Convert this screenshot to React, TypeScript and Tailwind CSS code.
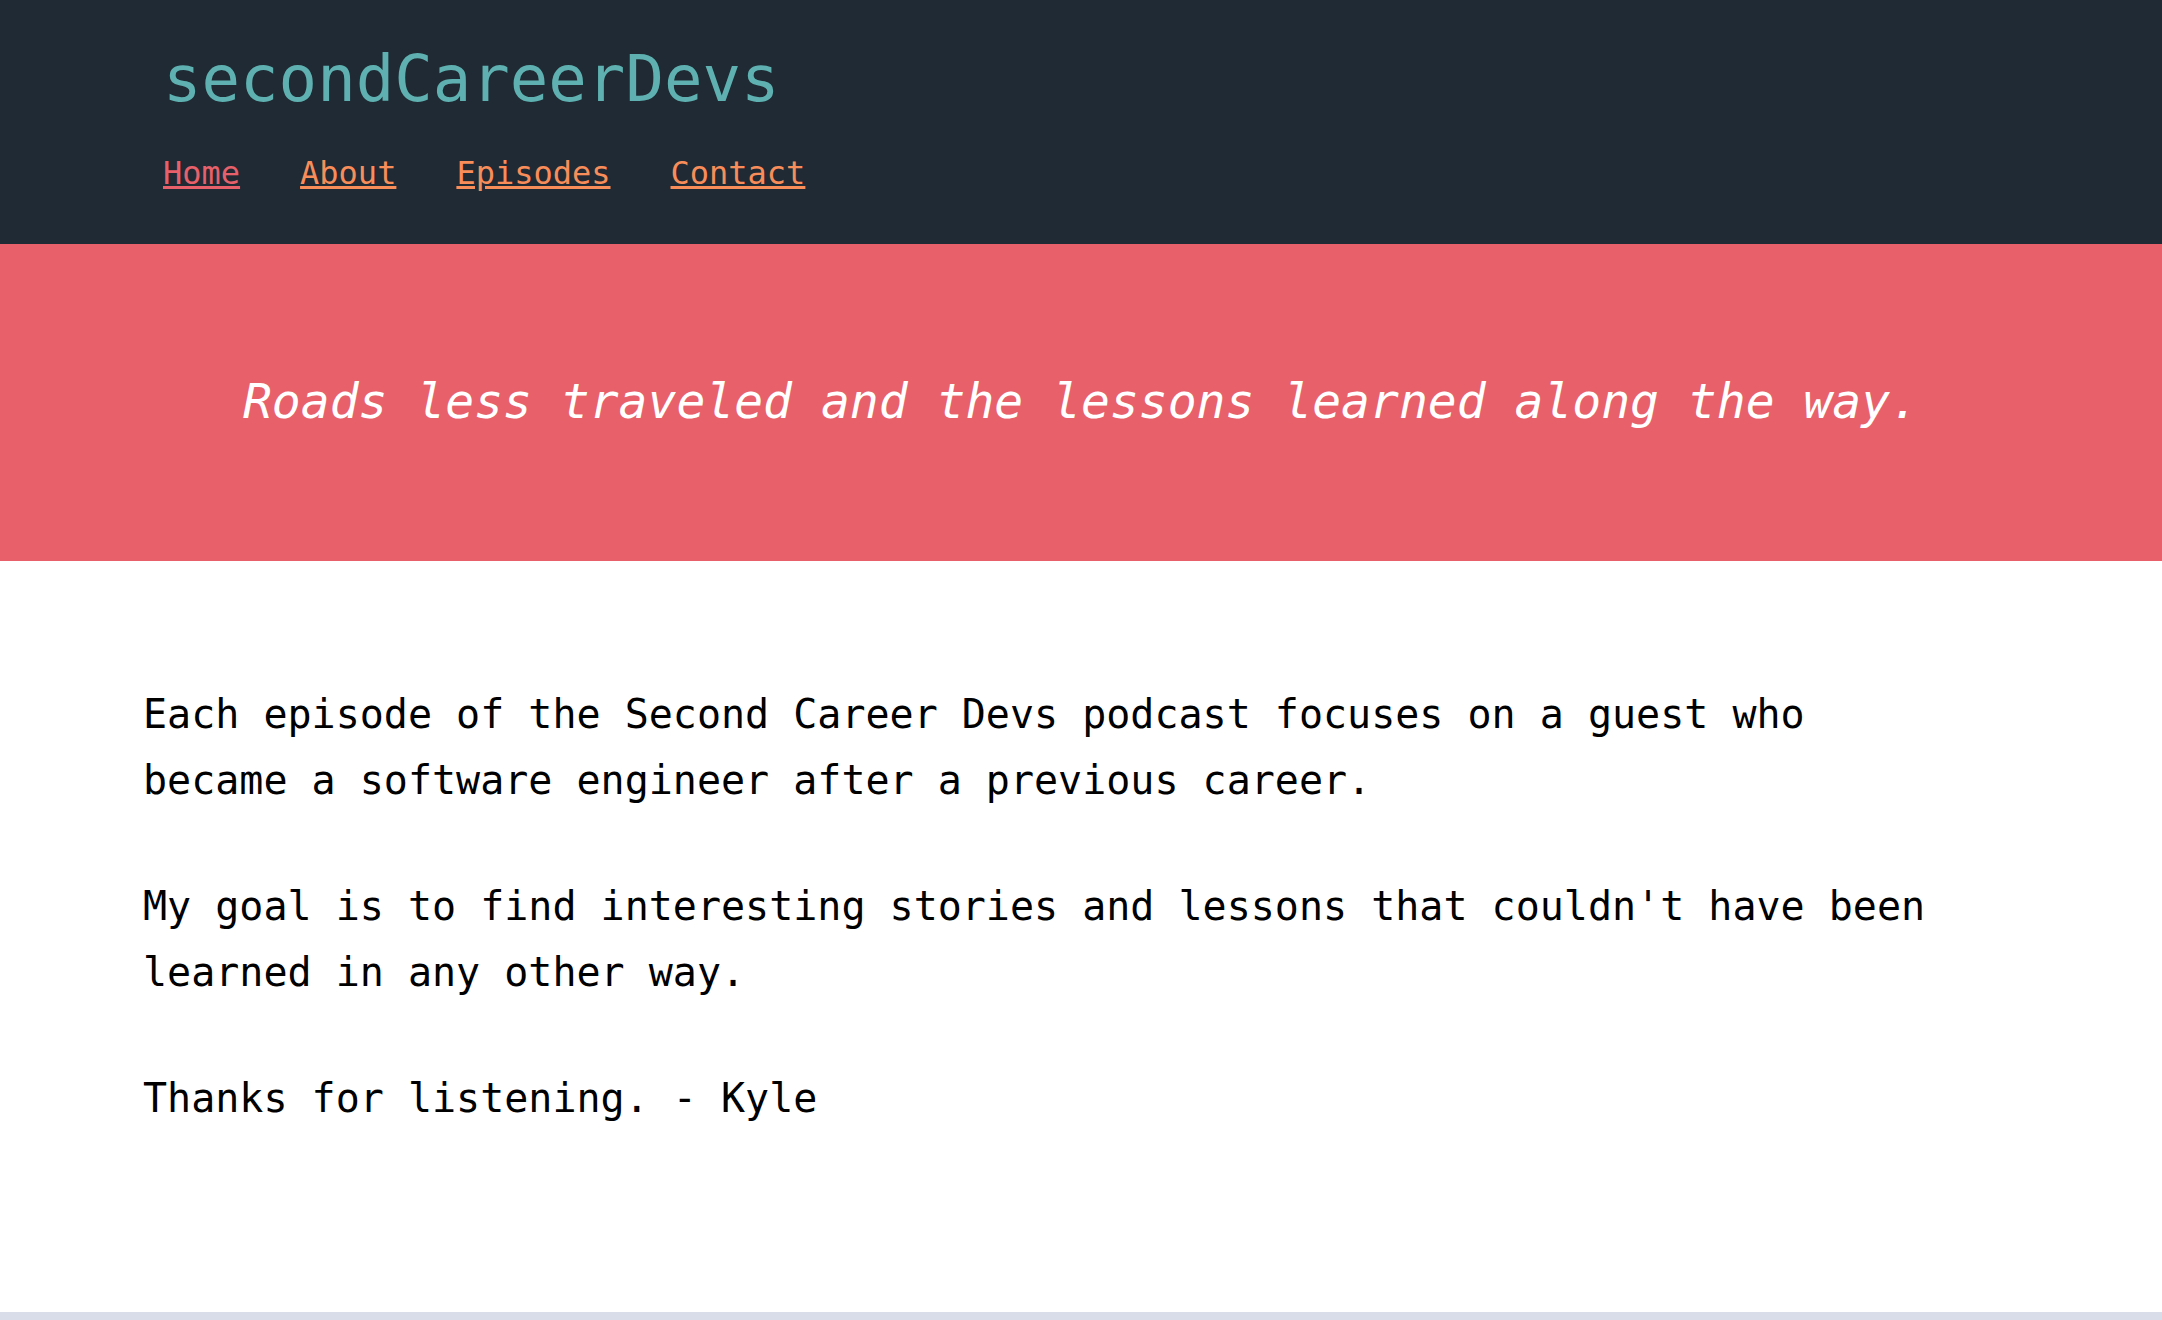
import React from 'react';

const links = [
  { label: 'Home', active: true },
  { label: 'About', active: false },
  { label: 'Episodes', active: false },
  { label: 'Contact', active: false },
];

const mono = { fontFamily: '"DejaVu Sans Mono", "Liberation Mono", monospace' };

export default function App() {
  return (
    <div className="min-h-screen flex flex-col bg-white" style={mono}>
      {/* Header */}
      <header className="bg-[#1f2a34] pl-[163px] pt-[47px] pb-[55px]">
        <h1 className="text-[64px] leading-[64px] text-[#5eb1b0] font-normal">secondCareerDevs</h1>
        <nav className="mt-[46px] flex gap-[60px] text-[32px] leading-[32px]">
          {links.map((l) => (
            <a
              key={l.label}
              href="#"
              className={`underline ${l.active ? 'text-[#e8606a]' : 'text-[#f98d5a]'}`}
            >
              {l.label}
            </a>
          ))}
        </nav>
      </header>

      {/* Tagline band */}
      <section className="bg-[#e8606a] pt-[133px] pb-[136px] text-center">
        <p className="italic text-white text-[48px] leading-[48px]">
          Roads less traveled and the lessons learned along the way.
        </p>
      </section>

      {/* Body */}
      <main className="flex-1 pl-[143px] pt-[120px]">
        <div className="max-w-[1800px] text-[40px] leading-[66px] text-black">
          <p className="mb-[60px]">
            Each episode of the Second Career Devs podcast focuses on a guest who became a software engineer after a previous career.
          </p>
          <p className="mb-[60px]">
            My goal is to find interesting stories and lessons that couldn't have been learned in any other way.
          </p>
          <p>Thanks for listening. - Kyle</p>
        </div>
      </main>

      <footer className="h-[8px] bg-[#d8dde9]" />
    </div>
  );
}
